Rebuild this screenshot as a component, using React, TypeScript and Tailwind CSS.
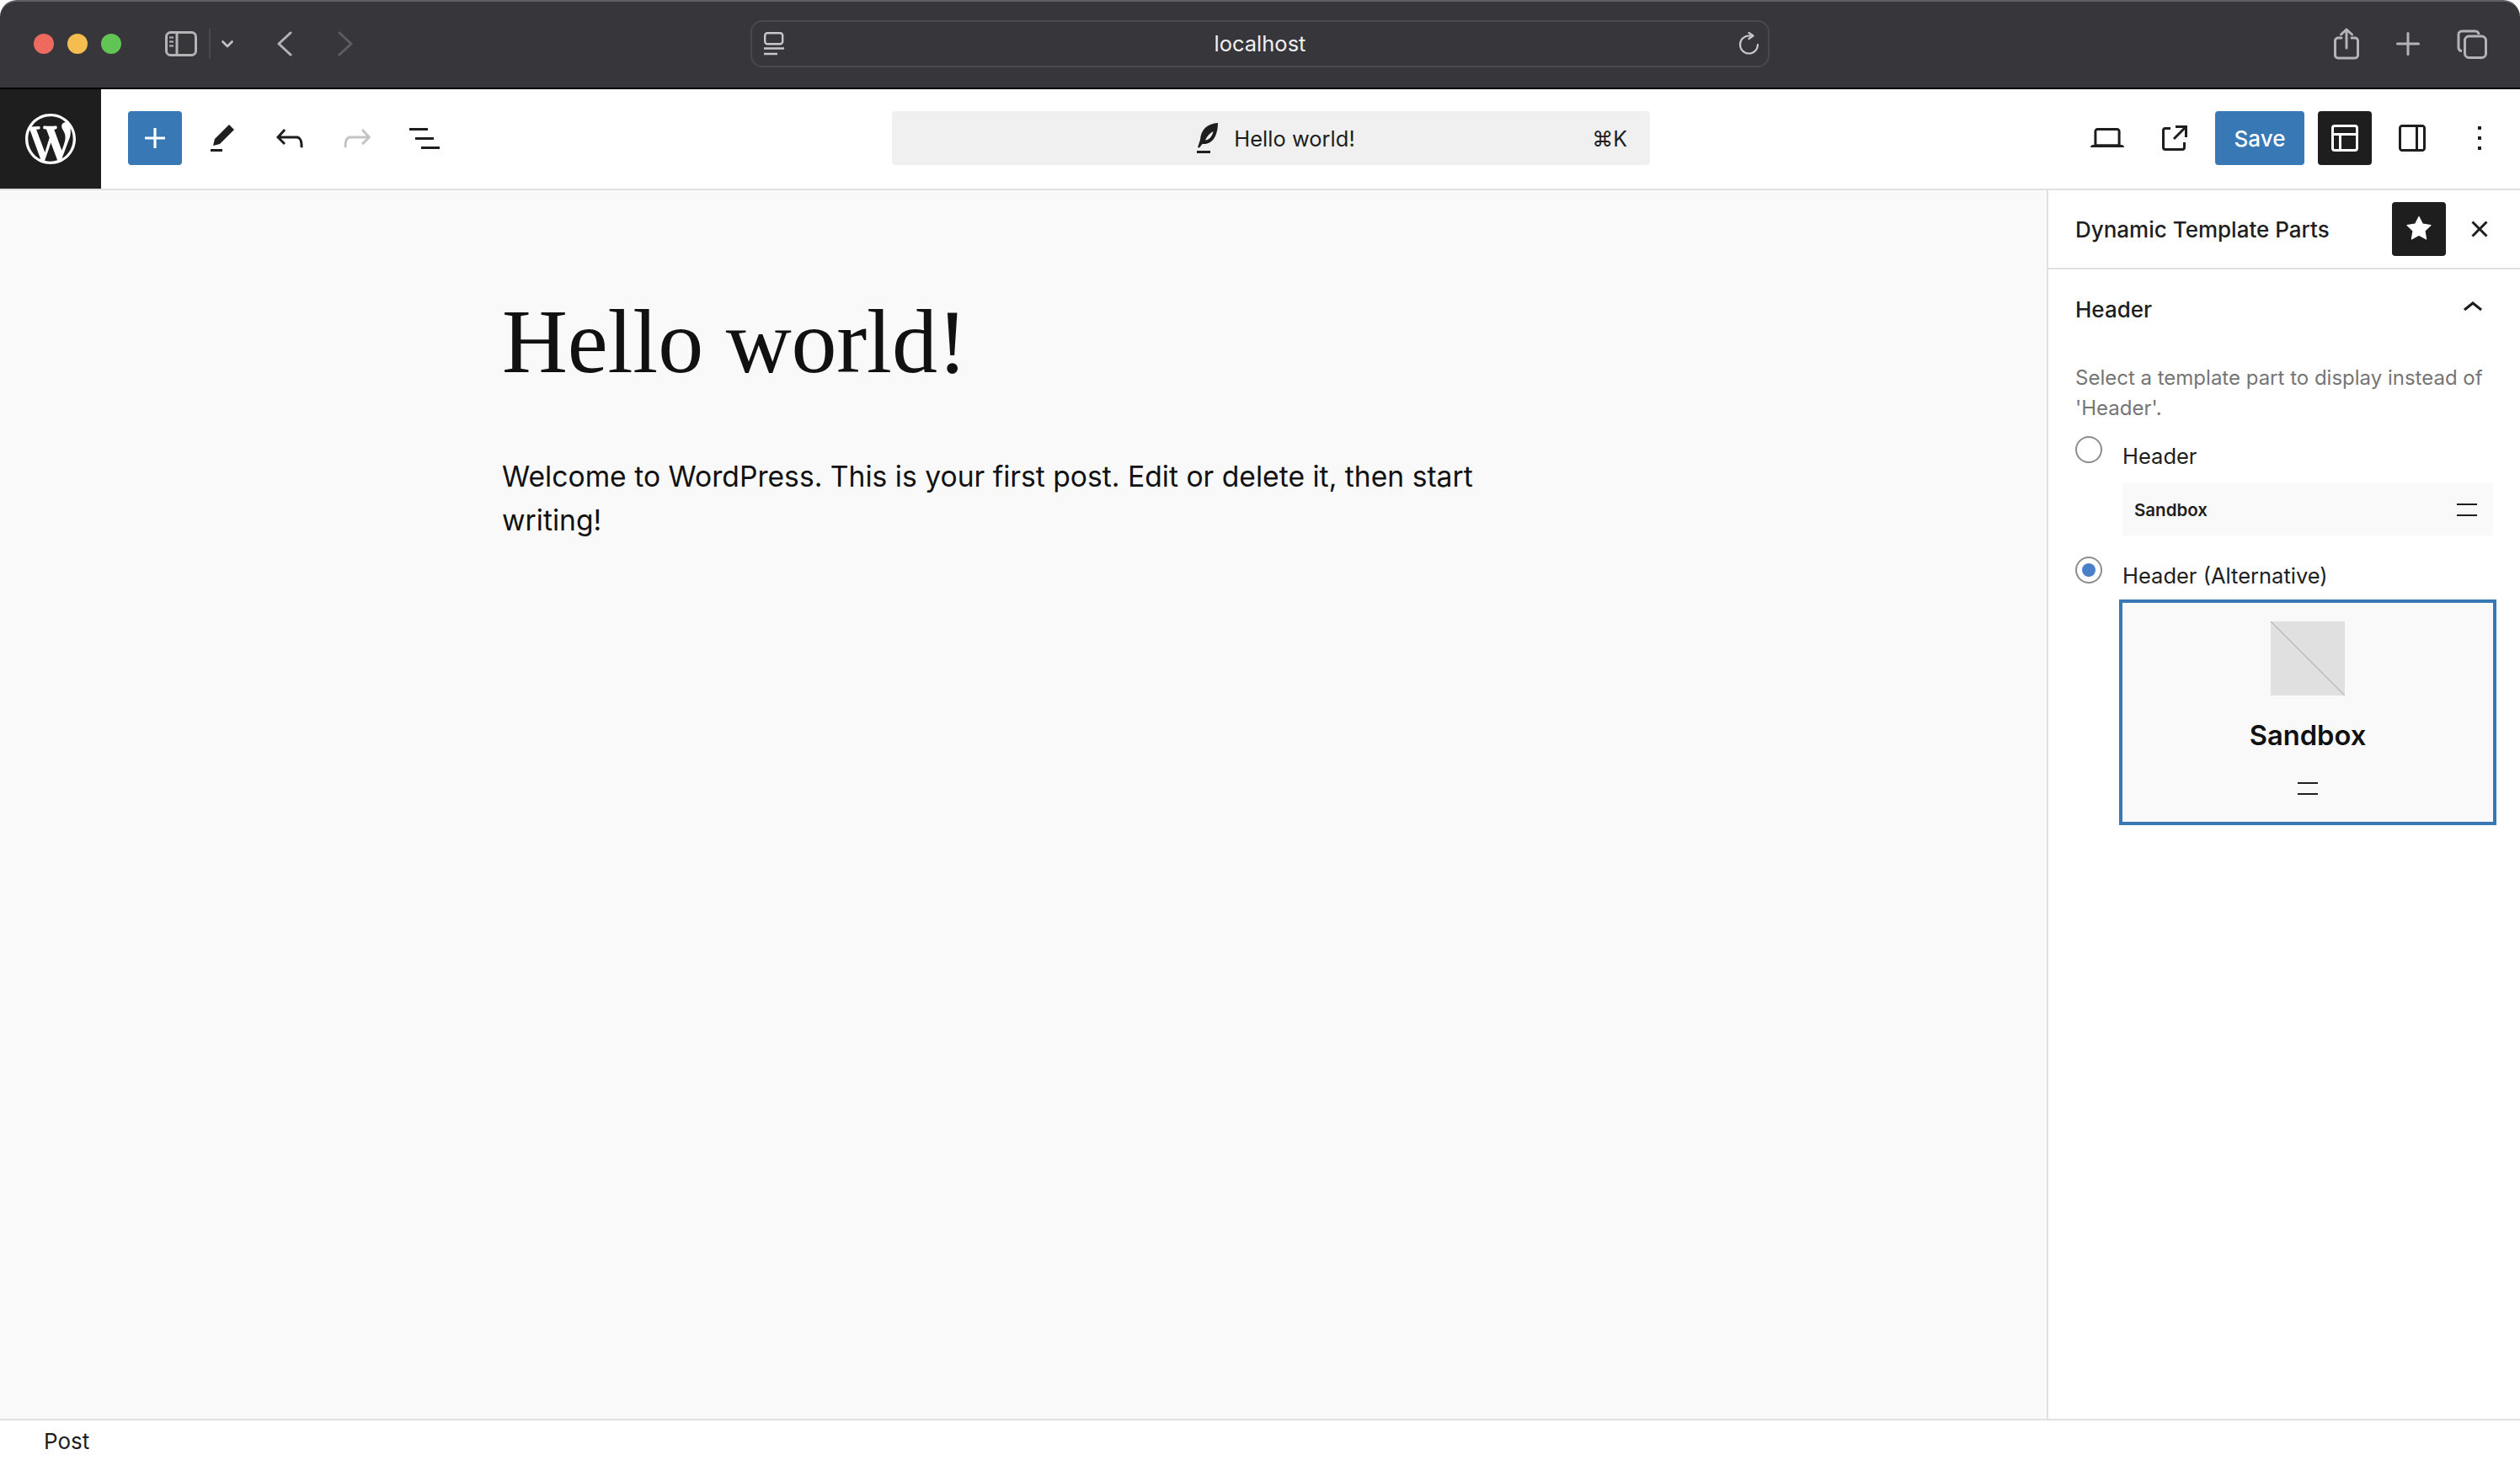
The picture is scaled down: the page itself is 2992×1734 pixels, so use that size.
const paths = {
  plus: "M18 11.2h-5.2V6h-1.6v5.2H6v1.6h5.2V18h1.6v-5.2H18z",
  pencil: "m19 7-3-3-8.5 8.5-1 4 4-1L19 7Zm-7 11.5H5V20h7v-1.5Z",
  undo: "M18.3 11.7c-.6-.6-1.4-.9-2.3-.9H6.7l2.9-3.3-1.1-1-4.5 5L8.5 16l1-1-2.7-2.7H16c.5 0 .9.2 1.3.5 1 1 1 3.4 1 4.5v.3h1.5v-.2c0-1.5 0-4.3-1.5-5.7z",
  redo: "M15.6 6.5l-1.1 1 2.9 3.3H8c-.9 0-1.7.3-2.3.9-1.4 1.5-1.4 4.2-1.4 5.7v.2h1.5v-.3c0-1.1 0-3.5 1-4.5.3-.3.7-.5 1.3-.5h9.2L14.5 15l1.1 1.1 4.6-4.6-4.6-5z",
  list: "M3 6h11v1.5H3V6Zm3.5 5.5h11V13h-11v-1.5ZM21 17H10v1.5h11V17Z",
  laptop: "M20.5 16h-.7V8c0-1.1-.9-2-2-2H6.2c-1.1 0-2 .9-2 2v8h-.7c-.8 0-1.5.7-1.5 1.5h20c0-.8-.7-1.5-1.5-1.5zM5.7 8c0-.3.2-.5.5-.5h11.6c.3 0 .5.2.5.5v7.6H5.7V8z",
  external: "M19.5 4.5h-7V6h4.44l-5.97 5.97 1.06 1.06L18 7.06v4.44h1.5v-7Zm-13 1a2 2 0 0 0-2 2v10a2 2 0 0 0 2 2h10a2 2 0 0 0 2-2v-3H17v3a.5.5 0 0 1-.5.5h-10a.5.5 0 0 1-.5-.5v-10a.5.5 0 0 1 .5-.5h3V5.5h-3Z",
  layout: "M18 5.5H6a.5.5 0 0 0-.5.5v3h13V6a.5.5 0 0 0-.5-.5zm.5 5H10v8h8a.5.5 0 0 0 .5-.5v-7.5zm-10 0h-3V18a.5.5 0 0 0 .5.5h2.5v-8zM6 4h12a2 2 0 0 1 2 2v12a2 2 0 0 1-2 2H6a2 2 0 0 1-2-2V6a2 2 0 0 1 2-2z",
  drawer: "M18 4H6c-1.1 0-2 .9-2 2v12c0 1.1.9 2 2 2h12c1.1 0 2-.9 2-2V6c0-1.1-.9-2-2-2zm-4 14.5H6c-.3 0-.5-.2-.5-.5V6c0-.3.2-.5.5-.5h8v13zm4.500-.5c0 .3-.2.5-.5.5h-2.500v-13H18c.3 0 .5.2.5.5v12z",
  more: "M13 19h-2v-2h2v2zm0-6h-2v-2h2v2zm0-6h-2V5h2v2z",
  star: "M11.776 4.454a.25.25 0 0 1 .448 0l2.069 4.192a.25.25 0 0 0 .188.137l4.626.672a.25.25 0 0 1 .139.426l-3.348 3.263a.25.25 0 0 0-.072.222l.79 4.607a.25.25 0 0 1-.362.263l-4.138-2.175a.25.25 0 0 0-.232 0l-4.138 2.175a.25.25 0 0 1-.363-.263l.79-4.607a.25.25 0 0 0-.071-.222L4.754 9.881a.25.25 0 0 1 .139-.426l4.626-.672a.25.25 0 0 0 .188-.137l2.069-4.192Z",
  close: "M12 13.06l3.712 3.713 1.061-1.06L13.061 12l3.712-3.712-1.06-1.06L12 10.938 8.288 7.227l-1.061 1.06L10.939 12l-3.712 3.712 1.06 1.061L12 13.061z",
  chevronUp: "M6.5 12.4L12 8l5.5 4.4-.9 1.2L12 10l-4.5 3.6-1-1.2z",
}

const wpLogo = "M20 10c0-5.51-4.49-10-10-10C4.48 0 0 4.49 0 10c0 5.52 4.48 10 10 10 5.51 0 10-4.48 10-10zM7.78 15.37L4.37 6.22c.55-.02 1.17-.08 1.17-.08.5-.06.44-1.13-.06-1.11 0 0-1.45.11-2.37.11-.18 0-.37 0-.58-.01C4.12 2.69 6.87 1.11 10 1.11c2.33 0 4.45.87 6.05 2.34-.68-.11-1.65.39-1.65 1.58 0 .74.45 1.36.9 2.1.35.61.55 1.36.55 2.46 0 1.49-1.4 5-1.4 5l-3.03-8.37c.54-.02.82-.17.82-.17.5-.05.44-1.25-.06-1.22 0 0-1.44.12-2.38.12-.87 0-2.33-.12-2.33-.12-.5-.03-.56 1.2-.06 1.22l.92.08 1.26 3.41zM17.41 10c.24-.64.74-1.87.43-4.25.7 1.29 1.05 2.71 1.05 4.25 0 3.29-1.73 6.24-4.4 7.78.97-2.59 1.94-5.2 2.92-7.78zM6.1 18.09C3.12 16.65 1.11 13.53 1.11 10c0-1.3.23-2.48.72-3.59C3.25 10.3 4.67 14.2 6.1 18.09zm4.03-6.63l2.58 6.98c-.86.29-1.76.45-2.71.45-.79 0-1.57-.11-2.29-.33.81-2.38 1.62-4.74 2.42-7.1z"

const Icon = ({ d, className = "fill-[#1e1e1e]" }: { d: string; className?: string }) => (
  <svg viewBox="0 0 24 24" className={`w-12 h-12 shrink-0 ${className}`}>
    <path d={d} />
  </svg>
)

const DragLines = () => (
  <svg viewBox="0 0 24 15" className="w-6 h-[15px] fill-[#1e1e1e]">
    <rect x="0" y="0" width="24" height="2" />
    <rect x="0" y="13" width="24" height="2" />
  </svg>
)

const SafariLeft = () => (
  <div className="flex items-center h-[100px] pl-10">
    <div className="flex gap-4">
      <span className="w-6 h-6 rounded-full bg-[#ee6a5f]" />
      <span className="w-6 h-6 rounded-full bg-[#f5bd4f]" />
      <span className="w-6 h-6 rounded-full bg-[#61c454]" />
    </div>
    <svg viewBox="0 0 38 30" className="w-[38px] h-[30px] ml-[52px] stroke-[#b4b4b6] fill-none" strokeWidth="3">
      <rect x="1.5" y="1.5" width="35" height="27" rx="5" />
      <path d="M14 1.5v27" />
      <path d="M5 7.5h5M5 12.5h5M5 17.5h5" strokeWidth="2" />
    </svg>
    <span className="w-0.5 h-9 bg-[#4a4a4e] ml-[14px]" />
    <svg viewBox="0 0 14 9" className="w-[14px] h-[9px] ml-[13px] stroke-[#c4c4c6] fill-none" strokeWidth="2.6" strokeLinecap="round" strokeLinejoin="round">
      <path d="M1.5 1.5 7 7l5.500-5.500" />
    </svg>
    <svg viewBox="0 0 18 30" className="w-[18px] h-[30px] ml-[52px] stroke-[#b4b4b6] fill-none" strokeWidth="3" strokeLinecap="round" strokeLinejoin="round">
      <path d="M16 2 2 15l14 13" />
    </svg>
    <svg viewBox="0 0 18 30" className="w-[18px] h-[30px] ml-[54px] stroke-[#5e5e62] fill-none" strokeWidth="3" strokeLinecap="round" strokeLinejoin="round">
      <path d="M2 2l14 13L2 28" />
    </svg>
  </div>
)

const UrlBar = () => (
  <div className="grid grid-cols-[1fr_auto_1fr] items-center h-[56px] mt-[22px] rounded-[14px] border-2 border-[#49494d] text-[#f0f0f0] text-[25.5px]">
    <svg viewBox="0 0 24 28" className="w-6 h-7 ml-[14px] stroke-[#c8c8ca] fill-none" strokeWidth="2.4">
      <rect x="1.2" y="1.2" width="21" height="13" rx="3" />
      <path d="M0 19.500h24M0 26h16" />
    </svg>
    <span className="leading-[32px]">localhost</span>
    <svg viewBox="0 0 26 28" className="w-[26px] h-7 ml-auto mr-[9px] stroke-[#c8c8ca] fill-none" strokeWidth="2.2" strokeLinecap="round" strokeLinejoin="round">
      <path d="M23 15a10.500 10.500 0 1 1-10.500-10.500h4" />
      <path d="M12.500 1l5 3.500-5 3.500" />
    </svg>
  </div>
)

const SafariRight = () => (
  <div className="flex items-center justify-end h-[100px] pr-[39px]">
    <svg viewBox="0 0 30 38" className="w-[30px] h-[38px] stroke-[#b4b4b6] fill-none" strokeWidth="3" strokeLinecap="round" strokeLinejoin="round">
      <path d="M9 12H5a3.500 3.500 0 0 0-3.500 3.500v17A3.500 3.500 0 0 0 5 36h20a3.500 3.500 0 0 0 3.500-3.500v-17A3.500 3.500 0 0 0 25 12h-4" />
      <path d="M15 24V2M8.500 8 15 2l6.500 6" />
    </svg>
    <svg viewBox="0 0 28 28" className="w-7 h-7 ml-[44px] stroke-[#b4b4b6] fill-none" strokeWidth="3" strokeLinecap="round">
      <path d="M14 1.500v25M1.500 14h25" />
    </svg>
    <svg viewBox="0 0 36 35" className="w-9 h-[35px] ml-[44px] stroke-[#b4b4b6] fill-none" strokeWidth="3">
      <path d="M6 25.500a4 4 0 0 1-4-3.500V6a4 4 0 0 1 4-4h16a4 4 0 0 1 4 4" />
      <rect x="9.500" y="8" width="25" height="25.500" rx="5" />
    </svg>
  </div>
)

const Feather = () => (
  <svg viewBox="0 0 28 40" className="w-7 h-10 -ml-px fill-[#1e1e1e]">
    <path fillRule="evenodd" d="M26 2C14 3 6 9 5 22L2 31l2 .5L7.500 27C21 28 26 15 26 2ZM20.500 12c-4.500 2.500-7.500 6-9.500 10.500C16 22 19.500 17.500 20.500 12Z" />
    <rect x="1" y="35" width="16" height="3" />
  </svg>
)

const CommandBar = () => (
  <div className="grid grid-cols-[1fr_auto_1fr] items-center h-16 mt-[26px] rounded-[4px] bg-[#f0f0f0] text-[#1e1e1e] text-[25.5px]">
    <span />
    <div className="flex items-center gap-[17px] ml-3">
      <Feather />
      <span className="mt-0.5 leading-[40px]">Hello world!</span>
    </div>
    <span className="ml-auto mr-[27px] mt-0.5 text-[25px] leading-[40px]">⌘K</span>
  </div>
)

const Toolbar = () => (
  <div className="grid grid-cols-[1059px_900px_1fr] h-[120px] bg-white border-b-2 border-[#e0e0e0]">
    <div className="flex items-start h-[118px]">
      <div className="flex items-center justify-center w-[120px] h-[118px] bg-[#1e1e1e]">
        <svg viewBox="0 0 20 20" className="w-[60px] h-[60px] fill-white">
          <path d={wpLogo} />
        </svg>
      </div>
      <div className="flex items-center ml-8 mt-[26px]">
        <div className="flex items-center justify-center w-16 h-16 rounded-[4px] bg-[#3778b5]">
          <Icon d={paths.plus} className="fill-white" />
        </div>
        <div className="flex items-center gap-8 ml-6">
          <Icon d={paths.pencil} />
          <Icon d={paths.undo} />
          <Icon d={paths.redo} className="fill-[#c4c4c4]" />
          <Icon d={paths.list} />
        </div>
      </div>
    </div>
    <CommandBar />
    <div className="flex items-center justify-end h-[116px] pr-6">
      <Icon d={paths.laptop} />
      <span className="ml-8"><Icon d={paths.external} /></span>
      <button className="w-[106px] h-16 ml-6 rounded-[4px] bg-[#3778b5] text-white text-[26px] font-medium">Save</button>
      <div className="flex items-center justify-center w-16 h-16 ml-4 rounded-[4px] bg-[#1e1e1e]">
        <Icon d={paths.layout} className="fill-white" />
      </div>
      <span className="ml-6"><Icon d={paths.drawer} /></span>
      <span className="ml-8"><Icon d={paths.more} /></span>
    </div>
  </div>
)

const Radio = ({ checked }: { checked?: boolean }) => (
  <span className="flex items-center justify-center w-8 h-8 shrink-0 rounded-full border-2 border-[#8c8c8c] bg-white">
    {checked && <span className="w-4 h-4 rounded-full bg-[#4a80c8]" />}
  </span>
)

const Sidebar = () => (
  <aside className="w-[562px] shrink-0 bg-white border-l-2 border-[#e0e0e0] text-[#1e1e1e] text-[26px]">
    <div className="flex items-center h-[94px] pl-8 pr-6 border-b-2 border-[#e0e0e0]">
      <span className="flex-1 mt-0.5 font-medium leading-[36px]">Dynamic Template Parts</span>
      <div className="flex items-center justify-center w-16 h-16 rounded-[4px] bg-[#1e1e1e]">
        <Icon d={paths.star} className="fill-white" />
      </div>
      <span className="ml-4"><Icon d={paths.close} /></span>
    </div>
    <div className="pl-8 pr-6">
      <div className="flex items-center justify-between h-24 pr-2">
        <span className="font-medium leading-[36px]">Header</span>
        <span className="mb-1"><Icon d={paths.chevronUp} /></span>
      </div>
      <p className="mt-[15px] text-[24px] leading-[36px] text-[#757575]">
        Select a template part to display instead of 'Header'.
      </p>
      <div className="flex items-start gap-6 mt-[15px]">
        <Radio />
        <div className="w-[440px]">
          <div className="mt-1.5 text-[25.5px] leading-[36px]">Header</div>
          <div className="flex items-center justify-between h-[62px] mt-[14px] pl-[14px] pr-[19px] bg-[#f9f9f9]">
            <span className="mt-0.5 text-[20.5px] font-semibold">Sandbox</span>
            <DragLines />
          </div>
        </div>
      </div>
      <div className="flex items-start gap-6 mt-[25px]">
        <Radio checked />
        <div className="w-[440px]">
          <div className="mt-[5px] text-[25.5px] leading-[36px]">Header (Alternative)</div>
          <div className="flex flex-col items-center h-[268px] -mx-1 mt-2.5 pt-[22px] border-4 border-[#3778b5] bg-[#f9f9f9]">
            <svg viewBox="0 0 88 88" className="w-[88px] h-[88px] bg-[#e0e0e0]">
              <path d="M0 0l88 88" className="stroke-[#b4b4b4]" strokeWidth="1.200" />
            </svg>
            <div className="mt-[27px] text-[32.7px] leading-[40px] font-semibold text-[#111111]">Sandbox</div>
            <div className="mt-9 h-[15px]"><DragLines /></div>
          </div>
        </div>
      </div>
    </div>
  </aside>
)

export default function App() {
  return (
    <div className="flex flex-col h-[1734px] bg-white font-['Inter',sans-serif]">
      <div className="grid grid-cols-[891px_1210px_1fr] h-[106px] rounded-t-[20px] bg-[#37363b] border-t-2 border-[#5f5f63] border-b-2 border-b-black overflow-hidden">
        <SafariLeft />
        <UrlBar />
        <SafariRight />
      </div>
      <Toolbar />
      <main className="flex flex-1 min-h-0">
        <div className="flex-1 pl-[596px] pt-[120px] bg-[#f9f9f9] text-[#111111]">
          <h1 className="font-['Liberation_Serif',serif] text-[108px] leading-[120px] tracking-[-0.2px]">Hello world!</h1>
          <p className="w-[1240px] mt-[74px] text-[33.66px] leading-[52px]">
            Welcome to WordPress. This is your first post. Edit or delete it, then start writing!
          </p>
        </div>
        <Sidebar />
      </main>
      <footer className="flex items-center h-[49px] pl-[52px] pt-0.5 bg-white border-t-2 border-[#e0e0e0] text-[26px] text-[#1e1e1e]">
        Post
      </footer>
    </div>
  )
}
